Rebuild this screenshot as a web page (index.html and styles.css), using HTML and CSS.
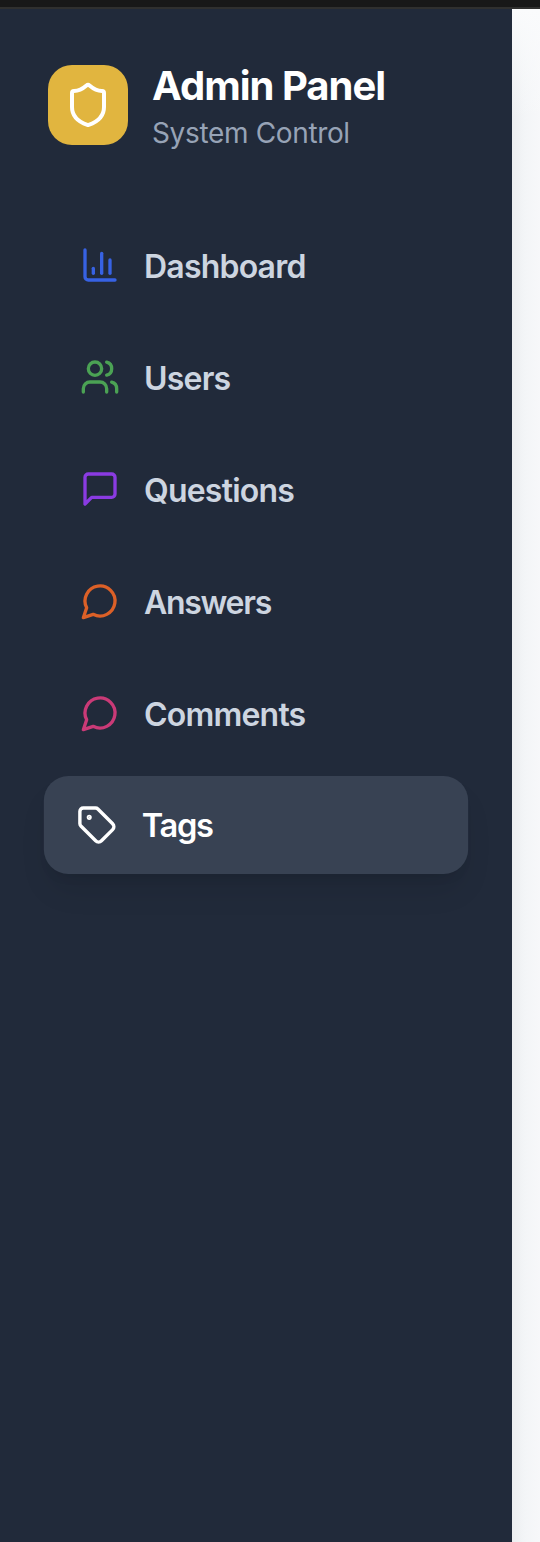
FILE: index.html
```html
<!DOCTYPE html>
<html lang="en">
<head>
<meta charset="utf-8">
<title>Admin Panel</title>
<link rel="stylesheet" href="styles.css">
</head>
<body>
<div class="topbar"></div>
<div class="shell">
  <aside class="sidebar">
    <header class="brand">
      <div class="logo">
        <svg class="icon logo-icon" viewBox="0 0 24 24"><path d="M20 13c0 5-3.5 7.5-7.66 8.95a1 1 0 0 1-.67-.01C7.5 20.5 4 18 4 13V6a1 1 0 0 1 1-1c2 0 4.5-1.2 6.24-2.72a1.17 1.17 0 0 1 1.52 0C14.51 3.81 17 5 19 5a1 1 0 0 1 1 1z"/></svg>
      </div>
      <div class="brand-text">
        <h1 class="title">Admin Panel</h1>
        <p class="subtitle">System Control</p>
      </div>
    </header>
    <nav class="nav">
      <a class="item"><svg class="icon blue" viewBox="0 0 24 24"><path d="M3 3v16a2 2 0 0 0 2 2h16"/><path d="M18 17V9"/><path d="M13 17V5"/><path d="M8 17v-3"/></svg><span class="label">Dashboard</span></a>
      <a class="item"><svg class="icon green" viewBox="0 0 24 24"><path d="M16 21v-2a4 4 0 0 0-4-4H6a4 4 0 0 0-4 4v2"/><circle cx="9" cy="7" r="4"/><path d="M22 21v-2a4 4 0 0 0-3-3.87"/><path d="M16 3.13a4 4 0 0 1 0 7.75"/></svg><span class="label">Users</span></a>
      <a class="item"><svg class="icon purple" viewBox="0 0 24 24"><path d="M21 15a2 2 0 0 1-2 2H7l-4 4V5a2 2 0 0 1 2-2h14a2 2 0 0 1 2 2z"/></svg><span class="label">Questions</span></a>
      <a class="item"><svg class="icon orange" viewBox="0 0 24 24"><path d="M7.9 20A9 9 0 1 0 4 16.1L2 22Z"/></svg><span class="label tight">Answers</span></a>
      <a class="item"><svg class="icon pink" viewBox="0 0 24 24"><path d="M7.9 20A9 9 0 1 0 4 16.1L2 22Z"/></svg><span class="label">Comments</span></a>
      <a class="item active"><svg class="icon" viewBox="0 0 24 24"><path d="M12.586 2.586A2 2 0 0 0 11.172 2H4a2 2 0 0 0-2 2v7.172a2 2 0 0 0 .586 1.414l8.704 8.704a2.426 2.426 0 0 0 3.42 0l6.58-6.58a2.426 2.426 0 0 0 0-3.42z"/><circle cx="7.5" cy="7.5" r=".5" fill="currentColor"/></svg><span class="label tight">Tags</span></a>
    </nav>
  </aside>
  <main class="content"></main>
</div>
</body>
</html>
```
FILE: styles.css
```css
* { box-sizing: border-box; }
body {
  margin: 0;
  height: 1542px;
  display: flex;
  flex-direction: column;
  overflow: hidden;
  font-family: Inter, "Liberation Sans", sans-serif;
}
.topbar { height: 9px; flex: none; background: #181818; border-bottom: 2px solid #30302f; }
.shell { flex: 1; display: flex; }
.sidebar { width: 512px; flex: none; padding: 56px 48px; background: #212a3a; }
.content {
  flex: 1;
  background:
    linear-gradient(to bottom, #fafbfc, rgba(250, 251, 252, 0) 110px),
    linear-gradient(to right, #eceef0, #f3f5f7 45%, #f7f8fa);
}
.brand { display: flex; align-items: center; gap: 24px; height: 80px; }
.logo {
  width: 80px;
  height: 80px;
  border-radius: 24px;
  background: #e1b53f;
  color: #fff;
  display: flex;
  align-items: center;
  justify-content: center;
}
.icon {
  width: 40px;
  height: 40px;
  flex: none;
  fill: none;
  stroke: currentColor;
  stroke-width: 2;
  stroke-linecap: round;
  stroke-linejoin: round;
}
.logo-icon { width: 48px; height: 48px; }
.title { margin: 0; padding-top: 2px; font-size: 40px; line-height: 54px; font-weight: 700; letter-spacing: -1px; color: #fff; white-space: nowrap; }
.subtitle { margin: 0; font-size: 28px; line-height: 40px; letter-spacing: -0.35px; color: #97a3b6; white-space: nowrap; }
.nav { display: flex; flex-direction: column; gap: 16px; margin-top: 72px; }
.item {
  display: flex;
  align-items: center;
  gap: 24px;
  height: 96px;
  padding: 0 32px;
  border-radius: 24px;
  color: #cdd5e0;
  font-size: 32px;
  font-weight: 570;
  letter-spacing: -0.8px;
}
.label { padding-top: 2px; }
.tight { letter-spacing: -1.3px; }
.active {
  background: #384253;
  color: #fff;
  transform: scale(1.02);
  box-shadow: 0 20px 30px -6px rgba(0, 0, 0, 0.1), 0 8px 12px -8px rgba(0, 0, 0, 0.1);
}
.active .label { padding-top: 1px; }
.blue { color: #3762e3; }
.green { color: #4ba254; }
.purple { color: #8a3be2; }
.orange { color: #dc6027; }
.pink { color: #ca3a77; }
```
